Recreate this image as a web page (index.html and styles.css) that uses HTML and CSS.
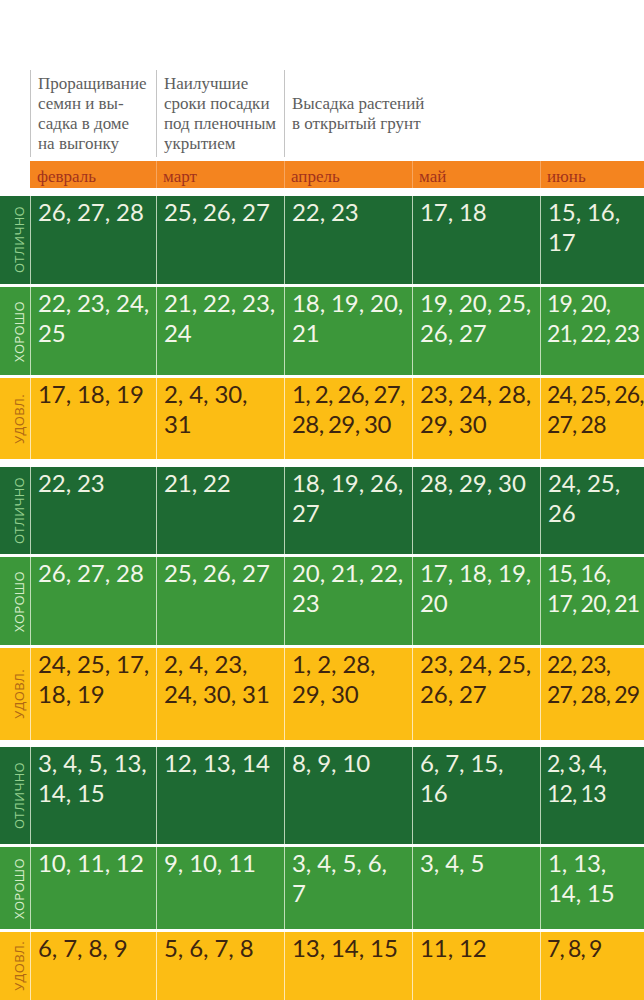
FILE: index.html
```html
<!DOCTYPE html>
<html lang="ru">
<head>
<meta charset="utf-8">
<title>Календарь посадки</title>
<link rel="stylesheet" href="styles.css">
</head>
<body>
<main class="sheet">
  <div class="head">
    <div class="head-blank"></div>
    <div class="head-cell">Проращивание<br>семян и вы-<br>садка в доме<br>на выгонку</div>
    <div class="head-cell">Наилучшие<br>сроки посадки<br>под пленочным<br>укрытием</div>
    <div class="head-cell head-wide">Высадка растений<br>в открытый грунт</div>
  </div>

  <div class="months">
    <div class="month-blank"></div>
    <div class="month first">февраль</div>
    <div class="month">март</div>
    <div class="month">апрель</div>
    <div class="month">май</div>
    <div class="month">июнь</div>
  </div>

  <section class="group g1">
    <div class="row best h88">
      <div class="label"><span>отлично</span></div>
      <div class="cell">26, 27, 28</div>
      <div class="cell">25, 26, 27</div>
      <div class="cell">22, 23</div>
      <div class="cell">17, 18</div>
      <div class="cell">15, 16,<br>17</div>
    </div>
    <div class="row good h88">
      <div class="label"><span>хорошо</span></div>
      <div class="cell">22, 23, 24,<br>25</div>
      <div class="cell">21, 22, 23,<br>24</div>
      <div class="cell">18, 19, 20,<br>21</div>
      <div class="cell">19, 20, 25,<br>26, 27</div>
      <div class="cell tight">19, 20,<br>21, 22, 23</div>
    </div>
    <div class="row fair h81">
      <div class="label"><span>удовл.</span></div>
      <div class="cell">17, 18, 19</div>
      <div class="cell">2, 4, 30,<br>31</div>
      <div class="cell snug">1, 2, 26, 27,<br>28, 29, 30</div>
      <div class="cell">23, 24, 28,<br>29, 30</div>
      <div class="cell tight">24, 25, 26,<br>27, 28</div>
    </div>
  </section>

  <section class="group g2">
    <div class="row best h87">
      <div class="label"><span>отлично</span></div>
      <div class="cell">22, 23</div>
      <div class="cell">21, 22</div>
      <div class="cell">18, 19, 26,<br>27</div>
      <div class="cell">28, 29, 30</div>
      <div class="cell">24, 25,<br>26</div>
    </div>
    <div class="row good h88">
      <div class="label"><span>хорошо</span></div>
      <div class="cell">26, 27, 28</div>
      <div class="cell">25, 26, 27</div>
      <div class="cell">20, 21, 22,<br>23</div>
      <div class="cell">17, 18, 19,<br>20</div>
      <div class="cell tight">15, 16,<br>17, 20, 21</div>
    </div>
    <div class="row fair h92">
      <div class="label"><span>удовл.</span></div>
      <div class="cell">24, 25, 17,<br>18, 19</div>
      <div class="cell">2, 4, 23,<br>24, 30, 31</div>
      <div class="cell">1, 2, 28,<br>29, 30</div>
      <div class="cell">23, 24, 25,<br>26, 27</div>
      <div class="cell tight">22, 23,<br>27, 28, 29</div>
    </div>
  </section>

  <section class="group g3">
    <div class="row best h97">
      <div class="label"><span>отлично</span></div>
      <div class="cell">3, 4, 5, 13,<br>14, 15</div>
      <div class="cell">12, 13, 14</div>
      <div class="cell">8, 9, 10</div>
      <div class="cell">6, 7, 15,<br>16</div>
      <div class="cell tight">2, 3, 4,<br>12, 13</div>
    </div>
    <div class="row good h82">
      <div class="label"><span>хорошо</span></div>
      <div class="cell">10, 11, 12</div>
      <div class="cell">9, 10, 11</div>
      <div class="cell">3, 4, 5, 6,<br>7</div>
      <div class="cell">3, 4, 5</div>
      <div class="cell">1, 13,<br>14, 15</div>
    </div>
    <div class="row fair h68">
      <div class="label"><span>удовл.</span></div>
      <div class="cell">6, 7, 8, 9</div>
      <div class="cell">5, 6, 7, 8</div>
      <div class="cell">13, 14, 15</div>
      <div class="cell">11, 12</div>
      <div class="cell tight">7, 8, 9</div>
    </div>
  </section>
</main>
</body>
</html>
```

FILE: styles.css
```css
html, body {
  margin: 0;
  padding: 0;
  background: #ffffff;
  overflow: hidden;
}

.sheet {
  width: 644px;
  height: 1000px;
  padding-top: 70px;
  box-sizing: border-box;
  display: flex;
  flex-direction: column;
  overflow: hidden;
}

/* header */
.head {
  height: 87px;
  display: grid;
  grid-template-columns: 30px 126px 128px 1fr;
  font-family: "Liberation Serif", "DejaVu Serif", serif;
  font-size: 17px;
  line-height: 20px;
  color: #5e5e5e;
}

.head-cell {
  border-left: 1px solid #c4c4c4;
  padding: 4px 0 0 7px;
  white-space: nowrap;
}

.head-wide {
  padding-top: 0;
  display: flex;
  align-items: center;
}

/* month band */
.months {
  margin-top: 4px;
  height: 27px;
  display: grid;
  grid-template-columns: 30px 126px 128px 128px 128px 1fr;
  font-family: "Liberation Serif", "DejaVu Serif", serif;
  font-size: 17px;
  color: #a2321c;
}

.month {
  background: #f4841f;
  border-left: 1px solid #f7a660;
  padding: 5px 0 0 6px;
  line-height: 22px;
}

.month.first {
  border-left: none;
  padding-left: 7px;
}

/* groups and rows */
.group {
  display: flex;
  flex-direction: column;
  gap: 3px;
}

.g1 { margin-top: 8px; }
.g2 { margin-top: 8px; }
.g3 { margin-top: 7px; }

.row {
  display: grid;
  grid-template-columns: 30px 126px 128px 128px 128px 1fr;
  font-family: Lato, "Open Sans", sans-serif;
  font-size: 24px;
  line-height: 30px;
  letter-spacing: -0.1px;
  overflow: hidden;
}

.h68 { height: 68px; }
.h81 { height: 81px; }
.h82 { height: 82px; }
.h87 { height: 87px; }
.h88 { height: 88px; }
.h92 { height: 92px; }
.h97 { height: 97px; }

.best { background: #1e6a33; color: #eef2e2; }
.good { background: #3c973a; color: #f3f6ea; }
.fair { background: #fcbd14; color: #3d2510; }

.cell {
  border-left: 1px solid rgba(235, 245, 225, 0.75);
  padding: 1px 0 0 7px;
  white-space: nowrap;
  overflow: hidden;
}

.fair .cell {
  border-left-color: rgba(255, 240, 200, 0.85);
}

.snug {
  letter-spacing: -0.6px;
  word-spacing: -1px;
}

.tight {
  padding-left: 6px;
  font-size: 23px;
  letter-spacing: -0.8px;
  word-spacing: -1px;
}

.label {
  display: flex;
  align-items: center;
  justify-content: center;
  padding-left: 8px;
  font-family: "Open Sans", "DejaVu Sans", sans-serif;
  font-size: 13px;
  line-height: 13px;
  text-transform: uppercase;
  letter-spacing: 0.3px;
}

.label span {
  writing-mode: vertical-rl;
  transform: rotate(180deg);
  white-space: nowrap;
}

.best .label { color: #94d08e; }
.good .label { color: #d4ecc8; }
.fair .label { color: #b06814; }
```
